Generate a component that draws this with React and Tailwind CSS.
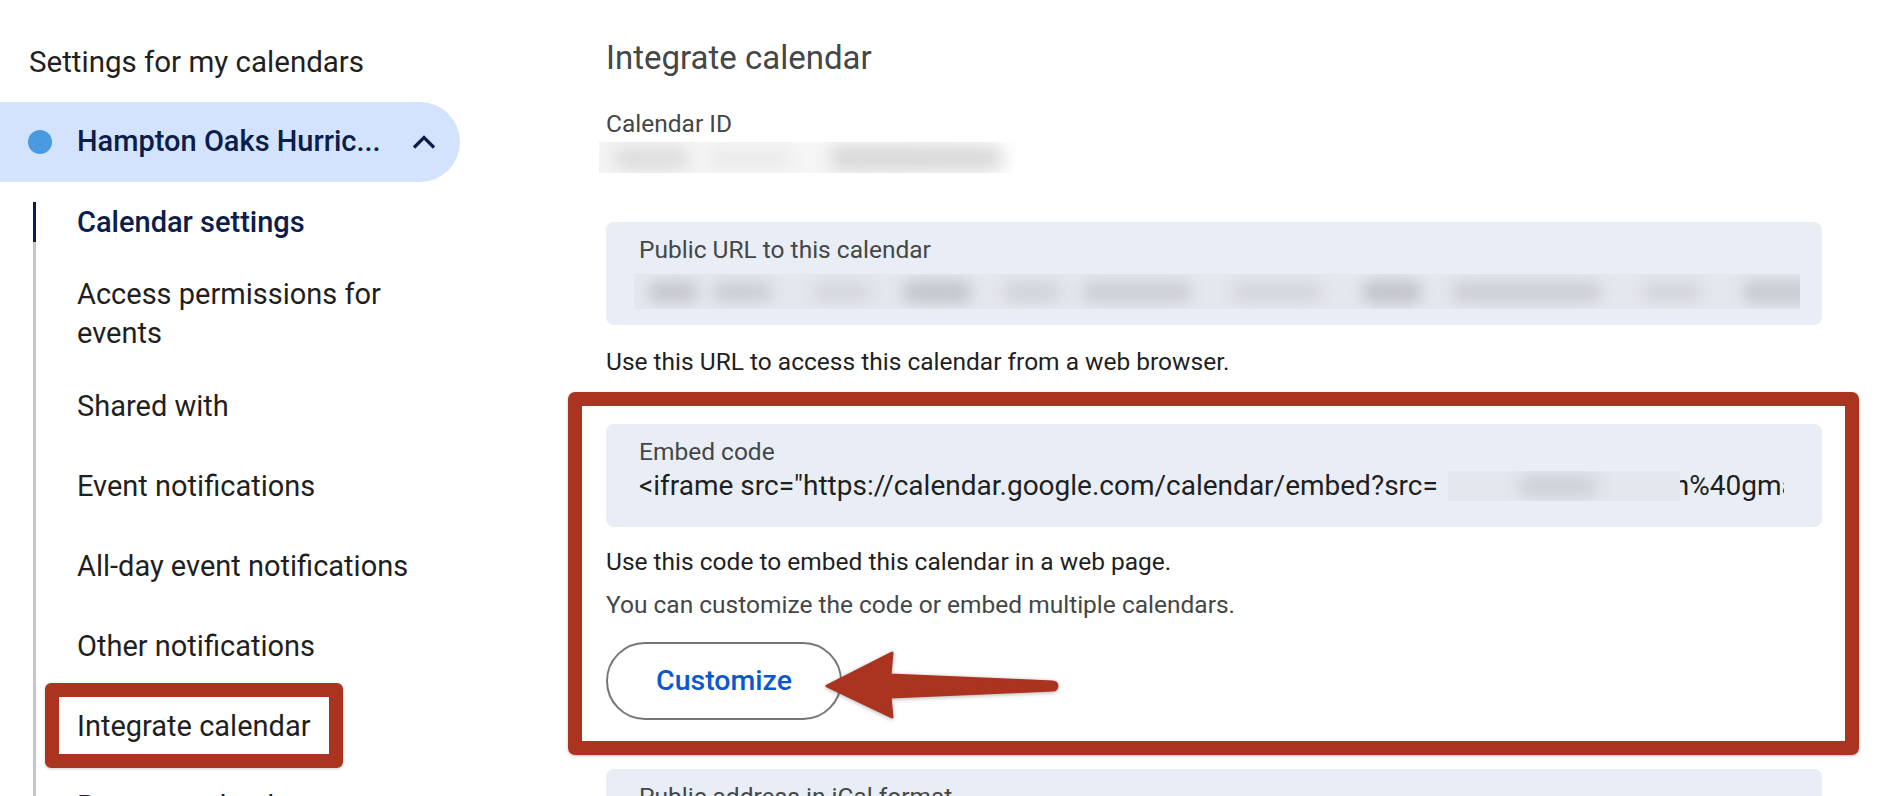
const NAV_ITEMS = [
  'Calendar settings',
  'Access permissions for events',
  'Shared with',
  'Event notifications',
  'All-day event notifications',
  'Other notifications',
  'Integrate calendar',
  'Remove calendar',
];

function Sidebar() {
  return (
    <aside className="w-[460px] shrink-0">
      <h1 className="pl-[29px] pt-[42px] text-[29.5px] leading-[40px] text-[#1f1f1f]">
        Settings for my calendars
      </h1>

      {/* Selected calendar pill */}
      <div className="mt-[20px] flex h-[80px] items-center rounded-r-full bg-[#d3e3fd] pl-[28px] pr-[24px]">
        <span className="h-6 w-6 shrink-0 rounded-full bg-[#4a9ae1]" />
        <span className="ml-[25px] flex-1 whitespace-nowrap text-[29px] font-medium text-[#0b1d4a]">
          Hampton Oaks Hurric...
        </span>
        <svg width="24" height="14" viewBox="0 0 24 14" fill="none" stroke="#0b1d4a" strokeWidth="3.2">
          <path d="M2 12.5 12 2.5l10 10" />
        </svg>
      </div>

      {/* Sub navigation */}
      <nav className="relative">
        <div className="absolute bottom-0 left-[33px] top-[20px] w-[3px] bg-[#c4c7c5]" />
        {NAV_ITEMS.map((item, i) => (
          <div key={item} className="relative flex min-h-[80px] items-center py-[13px] pl-[77px]">
            {i === 0 && (
              <div className="absolute left-[33px] top-[20px] h-[40px] w-[3px] bg-[#0b1d4a]" />
            )}
            {item === 'Integrate calendar' && (
              <div className="pointer-events-none absolute left-[45px] top-[-3px] h-[85px] w-[298px] rounded-[6px] border-[14px] border-[#aa3420] shadow-[0_1px_3px_rgba(0,0,0,0.2)]" />
            )}
            <span
              className={`w-[350px] text-[29px] leading-[39px] ${
                i === 0 ? 'font-medium text-[#0b1d4a]' : 'text-[#1f1f1f]'
              }`}
            >
              {item}
            </span>
          </div>
        ))}
      </nav>
    </aside>
  );
}

function CalendarIdBlur() {
  return (
    <div className="-ml-[7px] mt-[2px] flex h-[31px] w-[417px] items-center overflow-hidden bg-gradient-to-r from-[#f4f4f4] via-[#f6f6f6] to-white">
      <span className="ml-[14px] h-[22px] w-[76px] shrink-0 rounded-full bg-[#dcdcdc] blur-[8px]" />
      <span className="ml-[20px] h-[20px] w-[84px] shrink-0 rounded-full bg-[#eaeaea] blur-[8px]" />
      <span className="ml-[36px] h-[24px] w-[175px] shrink-0 rounded-full bg-[#d5d5d5] blur-[9px]" />
    </div>
  );
}

function UrlBlur() {
  return (
    <div className="-ml-[5px] mt-[8px] flex h-[35px] items-center overflow-hidden bg-[#e4e7ed]">
      <span className="ml-[14px] h-[22px] w-[50px] shrink-0 rounded-full bg-[#c6c9cf] blur-[7px]" />
      <span className="ml-[14px] h-[20px] w-[60px] shrink-0 rounded-full bg-[#cbced4] blur-[7px]" />
      <span className="ml-[40px] h-[20px] w-[60px] shrink-0 rounded-full bg-[#d5d8dd] blur-[7px]" />
      <span className="ml-[30px] h-[24px] w-[70px] shrink-0 rounded-full bg-[#c5c8ce] blur-[7px]" />
      <span className="ml-[30px] h-[20px] w-[60px] shrink-0 rounded-full bg-[#d1d4d9] blur-[7px]" />
      <span className="ml-[20px] h-[22px] w-[110px] shrink-0 rounded-full bg-[#cdd0d6] blur-[7px]" />
      <span className="ml-[40px] h-[20px] w-[90px] shrink-0 rounded-full bg-[#d3d6db] blur-[7px]" />
      <span className="ml-[40px] h-[24px] w-[60px] shrink-0 rounded-full bg-[#c3c6cc] blur-[7px]" />
      <span className="ml-[30px] h-[22px] w-[150px] shrink-0 rounded-full bg-[#cdd0d5] blur-[7px]" />
      <span className="ml-[40px] h-[20px] w-[60px] shrink-0 rounded-full bg-[#d2d5da] blur-[7px]" />
      <span className="ml-[40px] h-[24px] w-[120px] shrink-0 rounded-full bg-[#c9ccd2] blur-[7px]" />
    </div>
  );
}

function FieldBox({ label, children, className = '' }) {
  return (
    <div className={`rounded-[8px] bg-[#e9eef6] pl-[33px] pt-[12px] ${className}`}>
      <div className="text-[24.5px] leading-[32px] text-[#444746]">{label}</div>
      {children}
    </div>
  );
}

function Arrow() {
  return (
    <svg
      className="pointer-events-none absolute left-[214px] top-[224px] drop-shadow-[0_1px_2px_rgba(0,0,0,0.3)]"
      width="250"
      height="80"
      viewBox="0 0 250 80"
    >
      <path
        d="M7 38 72 5 70 27 233 34a4 4 0 0 1 0 8L70 49l2 20Z"
        fill="#aa3420"
        stroke="#aa3420"
        strokeWidth="3"
        strokeLinejoin="round"
      />
    </svg>
  );
}

export default function App() {
  return (
    <div className="flex h-[796px] overflow-hidden bg-white font-['Roboto',sans-serif]">
      <Sidebar />

      <main className="ml-[146px] min-w-0 flex-1 pr-[60px] pt-[38px]">
        <h2 className="text-[33px] leading-[40px] text-[#444746]">Integrate calendar</h2>

        <div className="mt-[30px] text-[24.5px] leading-[32px] text-[#444746]">Calendar ID</div>
        <CalendarIdBlur />

        <FieldBox label="Public URL to this calendar" className="mt-[49px] pb-[16px] pr-[22px]">
          <UrlBlur />
        </FieldBox>
        <p className="mt-[21px] text-[24.5px] leading-[32px] text-[#1f1f1f]">
          Use this URL to access this calendar from a web browser.
        </p>

        {/* Embed section with annotation */}
        <div className="relative mt-[46px]">
          <FieldBox label="Embed code" className="pb-[23px] pr-[38px]">
            <div className="overflow-hidden whitespace-nowrap text-[28px] leading-[36px] text-[#1f1f1f]">
              {'<iframe src="https://calendar.google.com/calendar/embed?src='}
              <span className="relative z-10 ml-[10px] -mr-[6px] inline-block h-[30px] w-[232px] overflow-hidden bg-[#e4e7ed] align-[-6px]">
                <span className="absolute left-[70px] top-[4px] h-[22px] w-[80px] rounded-full bg-[#cdd0d6] blur-[8px]" />
              </span>
              {'n%40gmail.com&ctz=America%2FChicago" style="border: 0"'}
            </div>
          </FieldBox>

          <p className="mt-[19px] text-[24.5px] leading-[32px] text-[#1f1f1f]">
            Use this code to embed this calendar in a web page.
          </p>
          <p className="mt-[11px] text-[24.5px] leading-[32px] text-[#444746]">
            You can customize the code or embed multiple calendars.
          </p>
          <button className="mt-[21px] h-[78px] w-[236px] rounded-full border-2 border-[#747775] text-[28.5px] font-medium text-[#0b57d0]">
            Customize
          </button>

          <div className="pointer-events-none absolute -bottom-[35px] -left-[38px] -right-[37px] -top-[32px] rounded-[7px] border-[14px] border-[#aa3420] shadow-[0_1px_3px_rgba(0,0,0,0.25)]" />
          <Arrow />
        </div>

        <FieldBox label="Public address in iCal format" className="mt-[49px] h-[120px]" />
      </main>
    </div>
  );
}
